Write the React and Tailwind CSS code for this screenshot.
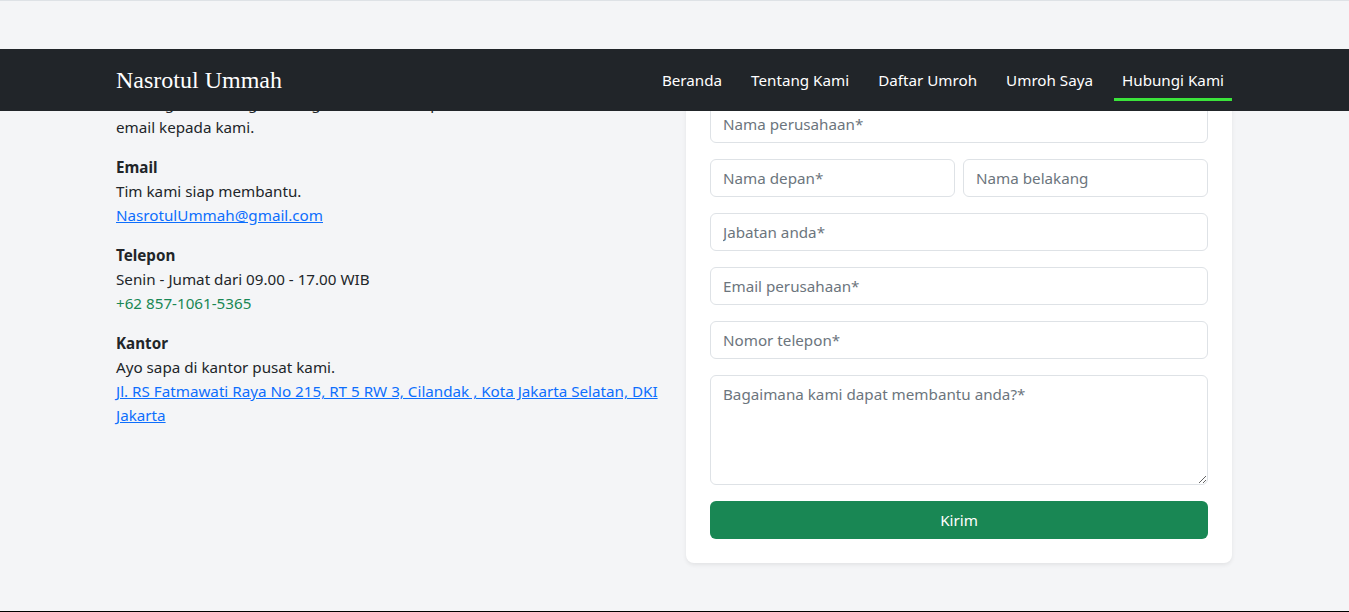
import React from "react";

const sans = "font-['Noto_Sans','Open_Sans',sans-serif]";

function Field({ placeholder, className = "" }) {
  return (
    <input
      type="text"
      placeholder={placeholder}
      className={`block h-[38px] w-full rounded-[6px] border border-[#dee2e6] bg-white px-3 text-[15.2px] text-[#212529] placeholder:text-[#6c757d] outline-none ${className}`}
    />
  );
}

export default function App() {
  const links = ["Beranda", "Tentang Kami", "Daftar Umroh", "Umroh Saya", "Hubungi Kami"];
  return (
    <div className={`flex h-[612px] w-full flex-col overflow-hidden bg-[#f4f5f7] ${sans} text-[15.2px] leading-6 text-[#212529]`}>
      <div className="h-px shrink-0 bg-[#dee2e6]" />
      <div className="h-[48px] shrink-0" />
      <div className="relative flex-1 overflow-hidden">
        <nav className="absolute inset-x-0 top-0 z-10 h-[62px] bg-[#212529]">
          <div className="mx-auto flex h-full w-[1117px] items-center justify-between pr-px">
            <span className="font-['Liberation_Serif',serif] text-[24px] leading-none text-white">Nasrotul Ummah</span>
            <ul className="flex h-full items-center gap-[13px]">
              {links.map((l, i) => (
                <li key={l} className="relative flex h-full items-center px-2 text-white">
                  {l}
                  {i === links.length - 1 && (
                    <span className="absolute inset-x-0 top-[49px] h-[3px] bg-[#3be43b]" />
                  )}
                </li>
              ))}
            </ul>
          </div>
        </nav>

        <div className="mx-auto flex w-[1117px] gap-6 pr-px pt-8">
          <div className="w-[546px] pt-[10px]">
            <p className="mb-4">
              Hubungi kami dengan mengisi formulir, telepon, atau kirimkan
              <br />
              email kepada kami.
            </p>
            <p className="font-bold">Email</p>
            <p>Tim kami siap membantu.</p>
            <a href="#" className="mb-4 block text-[#0d6efd] underline">NasrotulUmmah@gmail.com</a>
            <p className="font-bold">Telepon</p>
            <p>Senin - Jumat dari 09.00 - 17.00 WIB</p>
            <p className="mb-4 text-[#198754]">+62 857-1061-5365</p>
            <p className="font-bold">Kantor</p>
            <p>Ayo sapa di kantor pusat kami.</p>
            <a href="#" className="block text-[#0d6efd] underline">
              Jl. RS Fatmawati Raya No 215, RT 5 RW 3, Cilandak , Kota Jakarta Selatan, DKI Jakarta
            </a>
          </div>

          <div className="w-[546px]">
            <form className="flex flex-col gap-4 rounded-lg bg-white p-6 shadow-[0_2px_4px_rgba(0,0,0,0.075)]">
              <Field placeholder="Nama perusahaan*" />
              <div className="flex gap-2">
                <Field placeholder="Nama depan*" />
                <Field placeholder="Nama belakang" />
              </div>
              <Field placeholder="Jabatan anda*" />
              <Field placeholder="Email perusahaan*" />
              <Field placeholder="Nomor telepon*" />
              <textarea
                placeholder="Bagaimana kami dapat membantu anda?*"
                className="block h-[110px] w-full rounded-[6px] border border-[#dee2e6] bg-white px-3 py-[6px] text-[15.2px] placeholder:text-[#6c757d] outline-none"
              />
              <button type="button" className="h-[38px] w-full rounded-[6px] bg-[#198754] text-[15.2px] text-white">
                Kirim
              </button>
            </form>
          </div>
        </div>
      </div>
      <div className="h-px shrink-0 bg-black" />
    </div>
  );
}
